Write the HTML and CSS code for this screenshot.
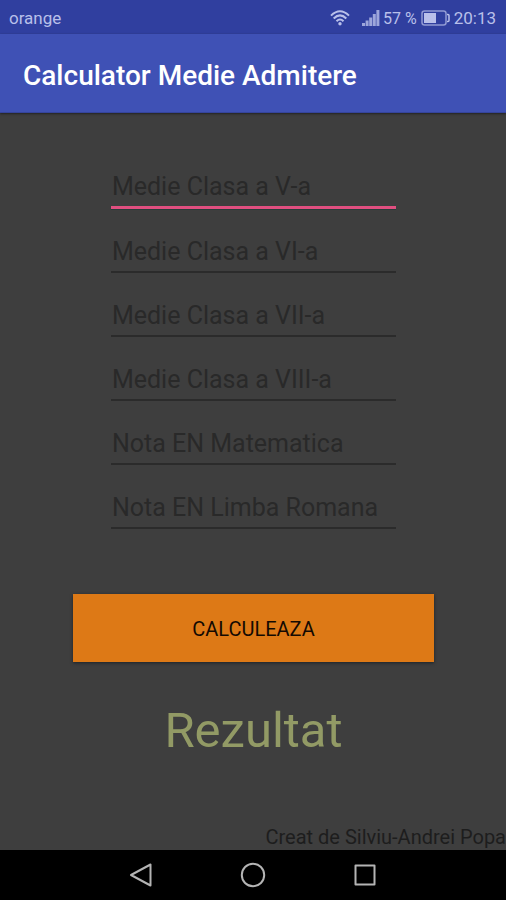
FILE: index.html
```html
<!DOCTYPE html>
<html lang="ro">
<head>
<meta charset="utf-8">
<meta name="viewport" content="width=device-width, initial-scale=1">
<title>Calculator Medie Admitere</title>
<link rel="stylesheet" href="styles.css">
</head>
<body>
<div class="status">
  <span class="carrier">orange</span>
  <svg class="wifi" width="20" height="16" viewBox="0 0 20 16" fill="none" stroke="currentColor" stroke-width="2" aria-hidden="true">
    <path d="M1 5.600Q10 -3 19 5.600M3.700 8.500Q10 2.300 16.300 8.500M6.500 11.300Q10 7.800 13.500 11.300"/>
    <circle cx="10" cy="13.700" r="1.700" fill="currentColor" stroke="none"/>
  </svg>
  <svg class="signal" width="18" height="16" viewBox="0 0 18 16" fill="currentColor" aria-hidden="true">
    <path d="M0 13h3v3H0zM3.600 10.500h3V16h-3zM7.200 7.500h3V16h-3zM10.800 4h3v12h-3zM14.400 0h3v16h-3z"/>
  </svg>
  <span class="percent">57 %</span>
  <svg class="battery" width="29" height="16" viewBox="0 0 29 16" aria-hidden="true">
    <rect x="1" y="1" width="24" height="14" rx="2.500" fill="none" stroke="currentColor" stroke-opacity="0.7" stroke-width="1.500"/>
    <rect x="3" y="3" width="12" height="10" fill="currentColor"/>
    <path d="M26 4.500h1q1 0 1 1v5q0 1-1 1h-1" fill="none" stroke="currentColor" stroke-width="1.500"/>
  </svg>
  <span class="clock">20:13</span>
</div>
<header class="appbar"><h1>Calculator Medie Admitere</h1></header>
<main>
  <form class="form">
    <div class="fields">
      <input class="field active" type="text" inputmode="decimal" aria-label="Medie Clasa a V-a" placeholder="Medie Clasa a V-a">
      <input class="field" type="text" inputmode="decimal" aria-label="Medie Clasa a VI-a" placeholder="Medie Clasa a VI-a">
      <input class="field" type="text" inputmode="decimal" aria-label="Medie Clasa a VII-a" placeholder="Medie Clasa a VII-a">
      <input class="field" type="text" inputmode="decimal" aria-label="Medie Clasa a VIII-a" placeholder="Medie Clasa a VIII-a">
      <input class="field" type="text" inputmode="decimal" aria-label="Nota EN Matematica" placeholder="Nota EN Matematica">
      <input class="field" type="text" inputmode="decimal" aria-label="Nota EN Limba Romana" placeholder="Nota EN Limba Romana">
    </div>
    <button class="submit" type="button">CALCULEAZA</button>
    <output class="result">Rezultat</output>
  </form>
  <p class="credit">Creat de Silviu-Andrei Popa</p>
</main>
<nav class="navbar">
  <button type="button" aria-label="Back">
    <svg width="26" height="26" viewBox="0 0 26 26"><path d="M3 13 22.500 2.500v21z"/></svg>
  </button>
  <button type="button" aria-label="Home">
    <svg width="26" height="26" viewBox="0 0 26 26"><circle cx="13" cy="13" r="11.200"/></svg>
  </button>
  <button type="button" aria-label="Recents">
    <svg width="26" height="26" viewBox="0 0 26 26"><rect x="3.500" y="3.500" width="19" height="19"/></svg>
  </button>
</nav>
</body>
</html>
```
FILE: styles.css
```css
* {
  box-sizing: border-box;
}

body {
  margin: 0;
  min-height: 100vh;
  display: flex;
  flex-direction: column;
  background: #3e3e3e;
  font-family: Roboto, "Liberation Sans", sans-serif;
}

.status {
  display: flex;
  align-items: center;
  height: 34px;
  padding: 2px 10px 0 9px;
  background: #303f9f;
  color: #b9c0ea;
  font-size: 17px;
}

.carrier {
  flex: 1;
}

.signal {
  margin-left: 12px;
  opacity: 0.8;
}

.percent {
  margin: 0 4px 0 3px;
  font-size: 16px;
}

.clock {
  margin-left: 4px;
}

.appbar {
  display: flex;
  align-items: center;
  height: 79px;
  padding: 4px 23px 0;
  background: #3f51b5;
  border-bottom: 1px solid #35449c;
  box-shadow: 0 1px 2px #222;
}

h1 {
  margin: 0;
  color: #fff;
  font-size: 28px;
  font-weight: 500;
}

main {
  flex: 1;
  display: flex;
  flex-direction: column;
}

.form {
  display: flex;
  flex-direction: column;
  align-items: center;
  padding: 54px 72px 0 73px;
}

.fields {
  display: flex;
  flex-direction: column;
  gap: 22px;
  width: 79%;
}

.field {
  width: 100%;
  height: 42px;
  padding: 0 1px;
  border: 0;
  border-bottom: 2px solid #2b2b2b;
  border-radius: 0;
  outline: 0;
  background: none;
  color: #262626;
  font: 25px/36px Roboto, "Liberation Sans", sans-serif;
}

.field::placeholder {
  color: #292929;
  opacity: 1;
}

.active {
  border-bottom: 3px solid #e04f80;
  box-shadow: 0 1px 0 #263d39;
}

.submit {
  width: 100%;
  height: 68px;
  margin-top: 65px;
  padding: 2px 0 0;
  border: 0;
  background: #dd7916;
  box-shadow: 0 1px 3px #1c2228;
  color: #140a02;
  font: 400 20px Roboto, "Liberation Sans", sans-serif;
}

.result {
  margin-top: 40px;
  color: #929a65;
  font-size: 49px;
  line-height: 58px;
}

.credit {
  margin: auto 0 0;
  color: #1d1d1d;
  font-size: 20px;
  line-height: 25px;
  text-align: right;
}

.navbar {
  display: flex;
  justify-content: center;
  gap: 86px;
  height: 50px;
  background: #000;
}

.navbar button {
  display: flex;
  align-items: center;
  padding: 0;
  border: 0;
  background: none;
}

.navbar svg {
  fill: none;
  stroke: #b4b4b4;
  stroke-width: 2;
  stroke-linejoin: round;
}
```
